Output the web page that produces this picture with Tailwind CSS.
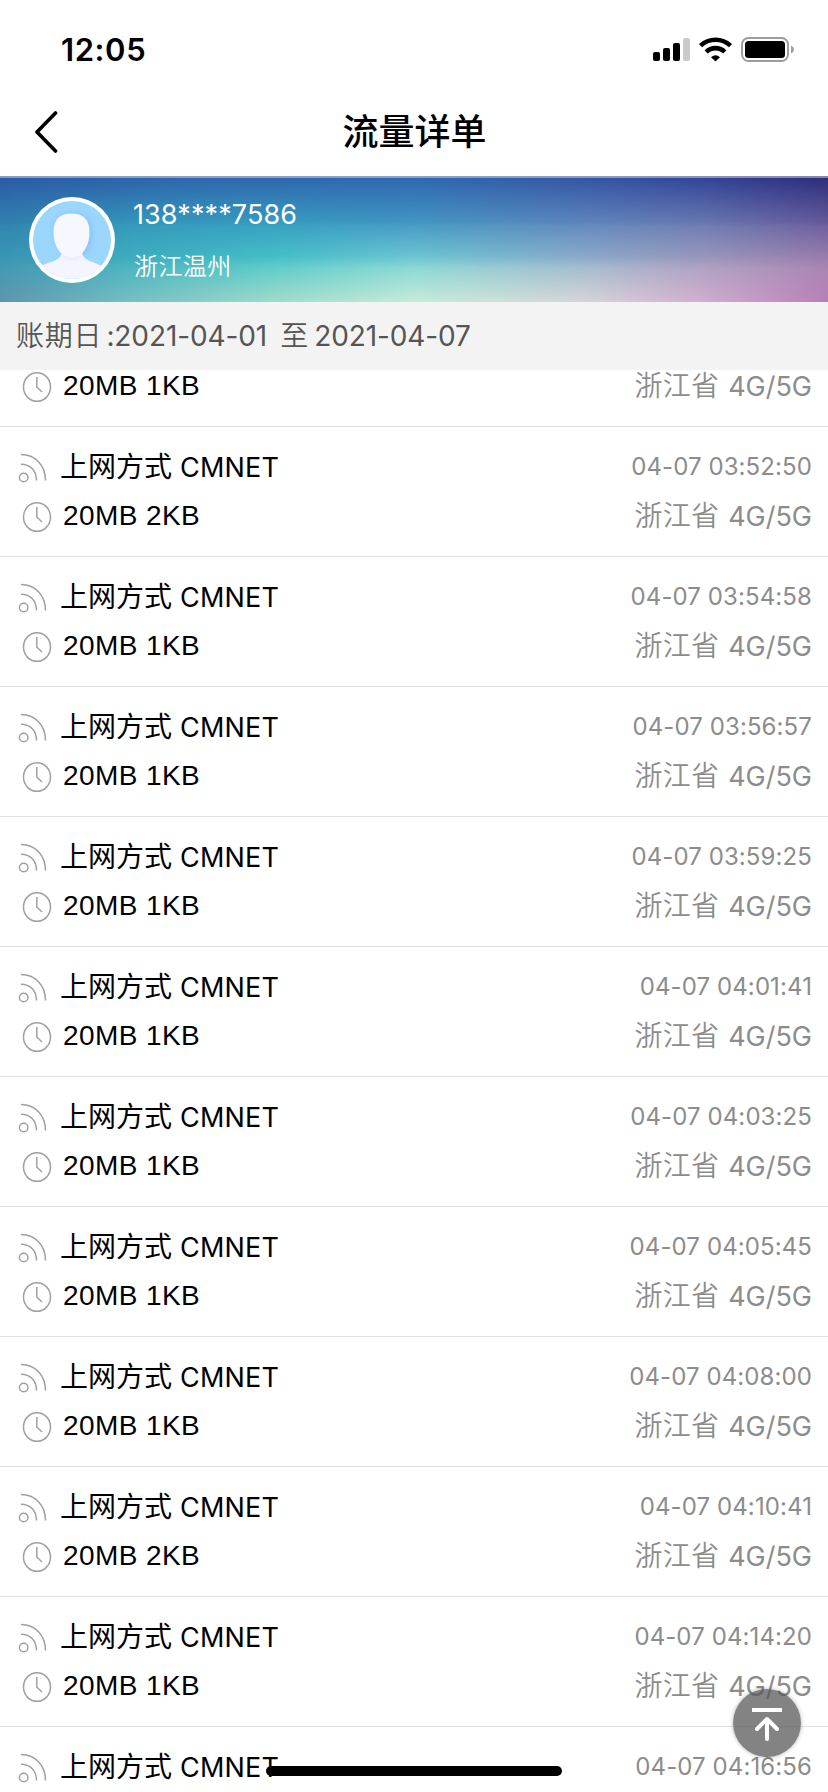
<!DOCTYPE html>
<html lang="zh-CN">
<head>
  <meta charset="UTF-8">
  <title>流量详单</title>
  <script src="https://cdn.jsdelivr.net/npm/@tailwindcss/browser@4"></script>
</head>
<body class="bg-white">
  <div class="relative w-[828px] h-[1792px] overflow-hidden flex flex-col bg-white font-['Inter','Noto_Sans_CJK_SC',sans-serif]">

    <!-- Status bar -->
    <div class="h-[88px] shrink-0 flex items-center justify-between pl-[61px] pr-[33px] pt-[11px]">
      <span class="text-[31px] leading-none font-semibold tracking-[0.6px]">12:05</span>
      <svg class="w-[142px] h-[26px]" viewBox="0 0 142 26">
        <rect x="0" y="15" width="7" height="9" rx="2"/>
        <rect x="10" y="11" width="7" height="13" rx="2"/>
        <rect x="20" y="6" width="7" height="18" rx="2"/>
        <rect x="30" y="1" width="7" height="23" rx="2" fill="#cacaca"/>
        <g fill="none" stroke="#000" stroke-width="4.600">
          <path d="M47.500 8.600 A22 22 0 0 1 77.500 8.600"/>
          <path d="M53.200 15 A13 13 0 0 1 71.800 15"/>
        </g>
        <path d="M58 20.200 Q62.500 16.400 67 20.200 L62.500 24.400 Z"/>
        <rect x="89" y="1" width="46" height="23" rx="6.500" fill="none" stroke="#9d9d9d" stroke-width="2"/>
        <rect x="92" y="4" width="40" height="17" rx="3.500"/>
        <path d="M138 8.500 Q141 10 141 12.500 Q141 15 138 16.500 Z" fill="#9d9d9d"/>
      </svg>
    </div>

    <!-- Title bar -->
    <div class="relative h-[88px] shrink-0 flex items-center justify-center">
      <svg class="absolute left-[34px] top-[22px] w-[24px] h-[44px]" viewBox="0 0 24 44" fill="none" stroke="#000" stroke-width="3.600" stroke-linecap="round" stroke-linejoin="round">
        <path d="M21.500 3 L3 22 L21.500 41"/>
      </svg>
      <h1 class="pl-px text-[36px] leading-none font-medium">流量详单</h1>
    </div>

    <!-- Profile banner: four colour rows faded into each other -->
    <div class="relative h-[126px] shrink-0 flex items-center pl-[29px] bg-[linear-gradient(to_right,#2b5ca5,#2f68ae_24%,#2f6ab0_50%,#3656a3_72%,#33479a_84%,#2e2f7c)]">
      <div class="absolute inset-0 bg-[linear-gradient(to_right,#3183b0,#3599bb_16%,#359fc2_33%,#4499c5_50%,#6386bd_72%,#6c7bb1_85%,#6a5c9d)] [mask-image:linear-gradient(transparent_2%,black_40%)]"></div>
      <div class="absolute inset-0 bg-[linear-gradient(to_right,#3c9bb5,#41b6c1_18%,#4bc9ca_33%,#7ad4d4_50%,#9ab3cb_72%,#a69fc0_85%,#a688b1)] [mask-image:linear-gradient(transparent_36%,black_74%)]"></div>
      <div class="absolute inset-0 bg-[linear-gradient(to_right,#5f94ad,#77c0c2_16%,#a0dacb_33%,#c6ebd8_50%,#d6d4d8_71%,#d2b0cf_84%,#b87fb8)] [mask-image:linear-gradient(transparent_64%,black_100%)]"></div>
      <div class="absolute inset-x-0 top-0 h-[2px] bg-[#dddddd]/50"></div>

      <svg class="relative w-[86px] h-[86px] mt-[2px]" viewBox="0 0 86 86">
        <defs>
          <clipPath id="face"><circle cx="43" cy="43" r="39"/></clipPath>
          <filter id="soft" x="-30%" y="-30%" width="160%" height="160%"><feGaussianBlur stdDeviation="3"/></filter>
        </defs>
        <circle cx="43" cy="43" r="43" fill="#fff"/>
        <g clip-path="url(#face)">
          <rect width="86" height="86" fill="#9bd6fd"/>
          <path d="M26 34 Q27 17 44 17 Q61 17 62 34 Q62 61 45 61 Q30 61 26 34Z" fill="#6fa8e8" opacity=".55" filter="url(#soft)"/>
          <path d="M33 54 H53 C53 65 66 64 74 70 V86 H10 V70 C20 64 33 65 33 54Z" fill="#f4f5fe"/>
          <ellipse cx="43" cy="59" rx="9" ry="3" fill="#dfe0f2" filter="url(#soft)"/>
          <path d="M24.500 35 C24.500 22 31 16.500 42.500 16.500 C54 16.500 60.500 22 60.500 35 C60.500 50 53 60.500 42.500 60.500 C32 60.500 24.500 50 24.500 35Z" fill="#f6f7ff"/>
        </g>
      </svg>
      <div class="relative ml-[18px] mt-[3px] text-white">
        <div class="text-[27px] leading-[34px] tracking-[0.1px]">138****7586</div>
        <div class="mt-[18px] ml-[1px] text-[24px] leading-[34px] font-[350] tracking-[0.4px]">浙江温州</div>
      </div>
    </div>

    <!-- Billing period -->
    <div class="relative z-10 h-[68px] shrink-0 flex items-center pl-[16px] bg-[#f3f3f3] text-[#555] text-[28px] leading-none">
      <span class="font-[350] tracking-[0.8px]">账期日</span>
      <span class="ml-[4px] tracking-[-0.1px]">:2021-04-01</span>
      <span class="ml-[13px] font-[350]">至</span>
      <span class="ml-[6px] tracking-[-0.1px]">2021-04-07</span>
    </div>

    <!-- Records, scrolled part of the way down -->
    <div id="records" class="-mt-[73px]"></div>

    <button class="absolute z-20 left-[733px] top-[1689px] w-[68px] h-[68px] rounded-full bg-[#5a5a5a]/75 shadow-[0_0_4px_rgba(0,0,0,0.3)]" aria-label="返回顶部">
      <svg class="w-[68px] h-[68px]" viewBox="0 0 68 68" fill="none" stroke="#fff" stroke-width="4" stroke-linecap="round" stroke-linejoin="round">
        <path d="M19 21 H49" stroke-linecap="butt"/>
        <path d="M34 50 V31"/>
        <path d="M24 40 L34 30 L44 40"/>
      </svg>
    </button>
    <div class="absolute z-20 left-[266px] top-[1766px] w-[296px] h-[10px] rounded-full bg-black"></div>
  </div>

  <script>
    const records = [
      ['04-07 03:50:36', '20MB 1KB'],
      ['04-07 03:52:50', '20MB 2KB'],
      ['04-07 03:54:58', '20MB 1KB'],
      ['04-07 03:56:57', '20MB 1KB'],
      ['04-07 03:59:25', '20MB 1KB'],
      ['04-07 04:01:41', '20MB 1KB'],
      ['04-07 04:03:25', '20MB 1KB'],
      ['04-07 04:05:45', '20MB 1KB'],
      ['04-07 04:08:00', '20MB 1KB'],
      ['04-07 04:10:41', '20MB 2KB'],
      ['04-07 04:14:20', '20MB 1KB'],
      ['04-07 04:16:56', '20MB 1KB']
    ];

    document.getElementById('records').innerHTML = records.map(([time, amount]) => `
      <div class="h-[130px] border-b border-[#e2e2e2] pt-[16px] pl-[18px] pr-[16px]">
        <div class="h-[48px] flex items-center justify-between">
          <div class="flex items-center">
            <svg class="w-[30px] h-[32px] mt-[2px]" viewBox="0 0 30 32" fill="none" stroke="#a0a0a0" stroke-width="1.500">
              <circle cx="5.700" cy="25.500" r="4.300"/>
              <path d="M3 2.500 C17 2.500 27.500 13 27.500 28.500"/>
              <path d="M3 12.200 C12 12.200 18.500 18.500 18.500 28.500"/>
            </svg>
            <span class="ml-[12px] text-[28px] leading-none">上网方式</span>
            <span class="ml-[8px] text-[27px] leading-none tracking-[0.2px]">CMNET</span>
          </div>
          <span class="text-[24px] leading-none tracking-[0.1px] text-[#8c8c8c]">${time}</span>
        </div>
        <div class="h-[50px] flex items-center justify-between">
          <div class="flex items-center pl-[4px]">
            <svg class="w-[30px] h-[32px] mt-[2px]" viewBox="0 0 30 32" fill="none" stroke="#a0a0a0" stroke-width="1.500">
              <ellipse cx="15" cy="16" rx="13.500" ry="14.300"/>
              <path d="M14.800 6 V16 L20 21"/>
            </svg>
            <span class="ml-[11px] text-[28px] leading-none tracking-[0.4px] font-['Liberation_Sans']">${amount}</span>
          </div>
          <div class="flex items-center leading-none text-[#8c8c8c]">
            <span class="text-[28px] font-[350] tracking-[0.2px]">浙江省</span>
            <span class="ml-[9px] text-[27px]">4G/5G</span>
          </div>
        </div>
      </div>
    `).join('');
  </script>
</body>
</html>
